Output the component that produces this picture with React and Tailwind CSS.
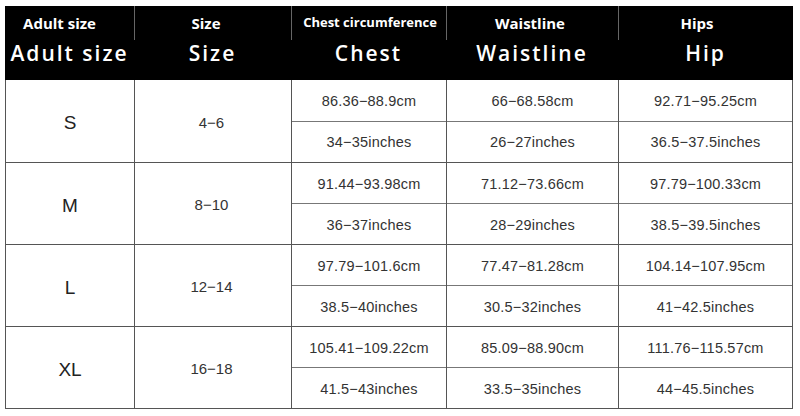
const cols = [
  { w: "w-[129px]", top: "Adult size", big: "Adult size", topCls: "text-[15px] pr-[20px]" },
  { w: "w-[157px]", top: "Size", big: "Size", topCls: "text-[15px] pr-[14px]" },
  { w: "w-[155px]", top: "Chest circumference", big: "Chest", topCls: "text-[13px] pl-[2px]" },
  { w: "w-[172px]", top: "Waistline", big: "Waistline", topCls: "text-[15px] pr-[5px]" },
  { w: "w-[175px]", top: "Hips", big: "Hip", topCls: "text-[15px] pr-[18px]" },
];

const rows = [
  {
    size: "S",
    range: "4−6",
    cm: ["86.36−88.9cm", "66−68.58cm", "92.71−95.25cm"],
    inch: ["34−35inches", "26−27inches", "36.5−37.5inches"],
  },
  {
    size: "M",
    range: "8−10",
    cm: ["91.44−93.98cm", "71.12−73.66cm", "97.79−100.33cm"],
    inch: ["36−37inches", "28−29inches", "38.5−39.5inches"],
  },
  {
    size: "L",
    range: "12−14",
    cm: ["97.79−101.6cm", "77.47−81.28cm", "104.14−107.95cm"],
    inch: ["38.5−40inches", "30.5−32inches", "41−42.5inches"],
  },
  {
    size: "XL",
    range: "16−18",
    cm: ["105.41−109.22cm", "85.09−88.90cm", "111.76−115.57cm"],
    inch: ["41.5−43inches", "33.5−35inches", "44−45.5inches"],
  },
];

const bodyFont = "font-['Liberation_Sans','Noto_Sans_CJK_SC',sans-serif]";

function App() {
  return (
    <div className="w-[800px] h-[416px] bg-white pt-[6px] pl-[5px]">
      <div className="w-[788px]">
        <div className="flex bg-black text-white font-['Open_Sans',sans-serif] h-[74px]">
          {cols.map((c, i) => (
            <div key={c.top} className={`${c.w} flex flex-col`}>
              <div
                className={`h-[34px] flex items-center justify-center font-bold ${c.topCls} ${
                  i > 0 ? "border-l border-[#666]" : ""
                }`}
              >
                {c.top}
              </div>
              <div className="flex-1 flex items-start justify-center text-[21px] font-semibold tracking-[2px] leading-[26px]">
                {c.big}
              </div>
            </div>
          ))}
        </div>

        <div className={`${bodyFont} text-[#222] border-l border-r border-b border-[#555]`}>
          {rows.map((r, ri) => (
            <div
              key={r.size}
              className={`flex h-[82px] ${ri > 0 ? "border-t border-[#555]" : ""}`}
            >
              <div className="w-[128px] flex items-center justify-center text-[19px] pt-[5px]">
                {r.size}
              </div>
              <div className="w-[157px] border-l border-[#555] flex items-center justify-center text-[15px] text-[#333] pr-[3px] pt-[4px]">
                {r.range}
              </div>
              {r.cm.map((cm, ci) => (
                <div
                  key={cm}
                  className={`${["w-[155px]", "w-[172px]", "w-[174px]"][ci]} border-l border-[#555] flex flex-col`}
                >
                  <div className="flex-1 flex items-center justify-center text-[14.5px] text-[#333] tracking-[0.2px] pt-[3px] border-b border-[#777]">
                    {cm}
                  </div>
                  <div className="flex-1 flex items-center justify-center text-[14.5px] text-[#333] tracking-[0.2px] pt-[3px]">
                    {r.inch[ci]}
                  </div>
                </div>
              ))}
            </div>
          ))}
        </div>
      </div>
    </div>
  );
}

export default App;
